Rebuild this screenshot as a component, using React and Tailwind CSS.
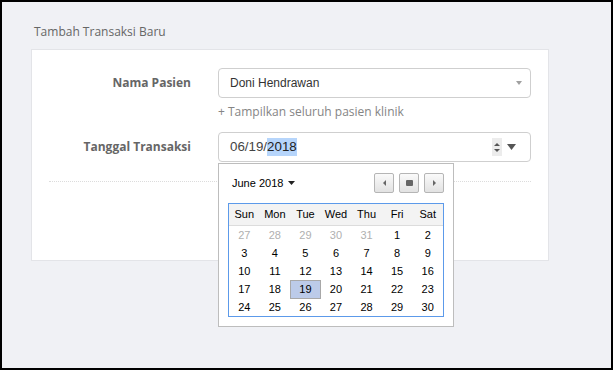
import React from "react"

const days = ["Sun", "Mon", "Tue", "Wed", "Thu", "Fri", "Sat"]

const weeks = [
  [27, 28, 29, 30, 31, 1, 2],
  [3, 4, 5, 6, 7, 8, 9],
  [10, 11, 12, 13, 14, 15, 16],
  [17, 18, 19, 20, 21, 22, 23],
  [24, 25, 26, 27, 28, 29, 30],
]

const NavButton = ({ children }) => (
  <button className="flex h-5 w-5 items-center justify-center rounded-[2px] border border-[#b5b5b5] bg-gradient-to-b from-[#fafafa] to-[#e2e2e2]">
    {children}
  </button>
)

const Calendar = () => (
  <div className="absolute left-0 top-[31px] z-10 w-[236px] border border-[#bdbdbd] bg-white p-[9px] font-['Liberation_Sans',Arial,sans-serif] text-[11px] text-black">
    <div className="flex h-5 items-center justify-between">
      <div className="flex items-center gap-[5px] pl-1">
        <span>June 2018</span>
        <svg width="7" height="4" viewBox="0 0 7 4">
          <path d="M0 0h7L3.5 4z" fill="#222" />
        </svg>
      </div>
      <div className="flex gap-[5px]">
        <NavButton>
          <svg width="3" height="6" viewBox="0 0 3 6">
            <path d="M3 0v6L0 3z" fill="#666" />
          </svg>
        </NavButton>
        <NavButton>
          <span className="h-[6px] w-[7px] rounded-[1px] bg-[#666]" />
        </NavButton>
        <NavButton>
          <svg width="3" height="6" viewBox="0 0 3 6">
            <path d="M0 0v6l3-3z" fill="#666" />
          </svg>
        </NavButton>
      </div>
    </div>

    <div className="mt-[10px] border border-[#5c9aea]">
      <div className="grid h-[22px] grid-cols-7 items-center border-b border-[#dcdcdc] bg-[#f3f3f3]">
        {days.map((d) => (
          <div key={d} className="text-center">
            {d}
          </div>
        ))}
      </div>
      {weeks.map((week, wi) => (
        <div key={wi} className="grid h-[18px] grid-cols-7">
          {week.map((n, di) => {
            const prev = wi === 0 && n > 7
            const selected = wi === 3 && n === 19
            return (
              <div
                key={di}
                className={`flex items-center justify-center ${
                  selected ? "border border-[#a8a8a8] bg-[#bccbe9]" : ""
                } ${prev ? "text-[#b0b0b0]" : "text-black"}`}
              >
                {n}
              </div>
            )
          })}
        </div>
      ))}
    </div>
  </div>
)

export default function App() {
  return (
    <div className="h-[370px] w-[613px] bg-black p-[2px]">
      <div className="h-full w-full bg-[#f0f1f5] pl-[29px] pt-[22px] font-['Open_Sans',sans-serif]">
        <div className="ml-[3px] text-[12px] leading-[16px] text-[#666]">Tambah Transaksi Baru</div>

        <div className="mt-[9px] h-[212px] w-[518px] border border-[#e3e4e8] bg-white pt-[18px]">
          {/* Nama Pasien */}
          <div className="flex items-center">
            <label className="w-[159px] text-right text-[12px] font-bold text-[#666]">Nama Pasien</label>
            <div className="ml-[27px] flex h-[30px] w-[313px] items-center justify-between rounded-[4px] border border-[#cfcfcf] pl-[11px] pr-[8px]">
              <span className="font-['Liberation_Sans',Arial,sans-serif] text-[12px] text-[#333]">Doni Hendrawan</span>
              <svg width="6" height="4" viewBox="0 0 6 4">
                <path d="M0 0h6L3 4z" fill="#a0a0a0" />
              </svg>
            </div>
          </div>
          <div className="ml-[186px] mt-[6px] text-[12px] leading-[16px] text-[#858585]">
            + Tampilkan seluruh pasien klinik
          </div>

          {/* Tanggal Transaksi */}
          <div className="mt-[12px] flex items-center">
            <label className="w-[159px] text-right text-[12px] font-bold text-[#666]">Tanggal Transaksi</label>
            <div className="relative ml-[27px]">
              <div className="flex h-[30px] w-[313px] items-center justify-between rounded-[4px] border border-[#cfcfcf] pl-[11px] pr-[14px] font-['Liberation_Sans',Arial,sans-serif] text-[13.33px] text-[#444]">
                <span className="flex items-center">
                  06/19/<span className="bg-[#b6d5fb] leading-[18px] text-[#222]">2018</span>
                </span>
                <span className="flex items-center gap-[5px]">
                  <span className="flex h-[18px] w-[10px] flex-col items-center justify-center gap-[3px] bg-[#ececec]">
                    <svg width="6" height="3" viewBox="0 0 6 3">
                      <path d="M0 3h6L3 0z" fill="#555" />
                    </svg>
                    <svg width="6" height="3" viewBox="0 0 6 3">
                      <path d="M0 0h6L3 3z" fill="#555" />
                    </svg>
                  </span>
                  <svg width="9" height="6" viewBox="0 0 9 6">
                    <path d="M0 0h9L4.5 6z" fill="#555" />
                  </svg>
                </span>
              </div>
              <Calendar />
            </div>
          </div>

          <div className="mx-[17px] mt-[19px] border-t border-dotted border-[#dcdcdc]" />
        </div>
      </div>
    </div>
  )
}
